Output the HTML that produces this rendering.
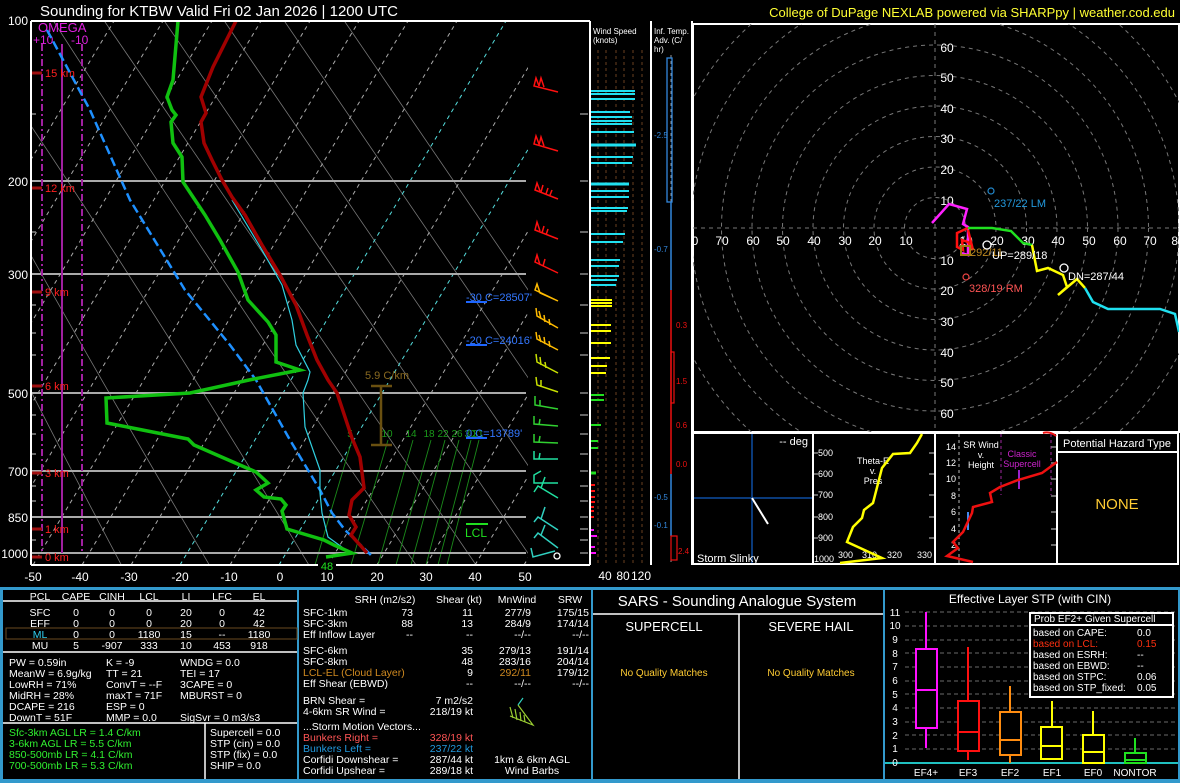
<!DOCTYPE html>
<html><head><meta charset="utf-8">
<style>
html,body{margin:0;padding:0;background:#000;}
svg{display:block;font-family:"Liberation Sans",sans-serif;}
</style></head><body>
<svg width="1180" height="783" viewBox="0 0 1180 783" xmlns="http://www.w3.org/2000/svg">
<rect width="1180" height="783" fill="#000"/>
<!-- title -->
<text x="40" y="16" fill="#fff" font-size="15">Sounding for KTBW Valid  Fri 02 Jan 2026 | 1200 UTC</text>
<text x="1175" y="17" fill="#ffff33" font-size="13" text-anchor="end">College of DuPage NEXLAB powered via SHARPpy | weather.cod.edu</text>

<!-- SKEW-T -->
<defs><clipPath id="sk"><rect x="31" y="21" width="497" height="544"/></clipPath>
<clipPath id="hd"><rect x="693" y="24" width="486" height="408"/></clipPath></defs>
<g clip-path="url(#sk)">
 <!-- dry adiabats -->
 <g stroke="#777" stroke-width="0.8" fill="none">
  <path d="M40,0 Q200,250 440,600"/><path d="M90,0 Q260,250 500,600"/><path d="M150,0 Q320,250 560,600"/>
  <path d="M210,0 Q380,250 620,600"/><path d="M270,0 Q440,250 680,600"/><path d="M330,0 Q500,250 740,600"/>
  <path d="M0,80 Q150,300 330,600"/><path d="M0,200 Q100,380 230,600"/><path d="M0,330 Q60,450 140,600"/>
 </g>
 <!-- isotherms -->
 <g stroke="#aaa" stroke-width="1" stroke-dasharray="4,4" fill="none">
  <line x1="-16" y1="565" x2="310" y2="21"/><line x1="33" y1="565" x2="359" y2="21"/><line x1="82" y1="565" x2="408" y2="21"/>
  <line x1="131" y1="565" x2="457" y2="21"/><line x1="230" y1="565" x2="556" y2="21"/>
  <line x1="328" y1="565" x2="654" y2="21"/><line x1="377" y1="565" x2="703" y2="21"/><line x1="426" y1="565" x2="752" y2="21"/>
  <line x1="475" y1="565" x2="801" y2="21"/><line x1="524" y1="565" x2="850" y2="21"/>
  <line x1="-65" y1="565" x2="261" y2="21"/><line x1="-114" y1="565" x2="212" y2="21"/><line x1="-163" y1="565" x2="163" y2="21"/><line x1="-212" y1="565" x2="114" y2="21"/>
 </g>
 <g stroke="#5dd" stroke-width="1" stroke-dasharray="4,4" fill="none">
  <line x1="180" y1="565" x2="506" y2="21"/><line x1="279" y1="565" x2="605" y2="21"/>
 </g>
 <!-- mixing ratio -->
 <g stroke="#1a8a1a" stroke-width="0.9">
  <line x1="352" y1="440" x2="315" y2="565"/><line x1="388" y1="440" x2="351" y2="565"/><line x1="413" y1="440" x2="378" y2="565"/>
  <line x1="431" y1="440" x2="396" y2="565"/><line x1="445" y1="440" x2="411" y2="565"/><line x1="459" y1="440" x2="426" y2="565"/>
  <line x1="471" y1="440" x2="438" y2="565"/><line x1="479" y1="440" x2="447" y2="565"/>
 </g>
 <g fill="#1a9a1a" font-size="10" text-anchor="middle">
  <text x="350" y="437">5</text><text x="387" y="437">10</text><text x="411" y="437">14</text><text x="429" y="437">18</text><text x="443" y="437">22</text><text x="457" y="437">26</text><text x="470" y="437">30</text><text x="478" y="437">31</text>
 </g>
</g>
<!-- pressure lines -->
<g stroke="#aaa" stroke-width="2">
 <line x1="31" y1="181" x2="526" y2="181"/><line x1="31" y1="274" x2="526" y2="274"/><line x1="31" y1="393" x2="526" y2="393"/>
 <line x1="31" y1="471" x2="526" y2="471"/><line x1="31" y1="517" x2="526" y2="517"/><line x1="31" y1="553" x2="526" y2="553"/>
</g>
<g fill="#fff" font-size="12" text-anchor="end">
 <text x="28" y="25">100</text><text x="28" y="186">200</text><text x="28" y="279">300</text><text x="28" y="398">500</text>
 <text x="28" y="476">700</text><text x="28" y="522">850</text><text x="28" y="558">1000</text>
</g>
<!-- pressure ticks -->
<g stroke="#888" stroke-width="1.5">
 <line x1="31" y1="114" x2="36" y2="114"/><line x1="31" y1="232" x2="36" y2="232"/><line x1="31" y1="305" x2="36" y2="305"/><line x1="31" y1="333" x2="36" y2="333"/>
 <line x1="31" y1="355" x2="36" y2="355"/><line x1="31" y1="415" x2="36" y2="415"/><line x1="31" y1="434" x2="36" y2="434"/><line x1="31" y1="454" x2="36" y2="454"/>
 <line x1="31" y1="486" x2="36" y2="486"/><line x1="31" y1="501" x2="36" y2="501"/><line x1="31" y1="540" x2="36" y2="540"/>
 <line x1="580" y1="114" x2="588" y2="114"/><line x1="580" y1="181" x2="588" y2="181"/><line x1="580" y1="232" x2="588" y2="232"/><line x1="580" y1="274" x2="588" y2="274"/>
 <line x1="580" y1="305" x2="588" y2="305"/><line x1="580" y1="333" x2="588" y2="333"/><line x1="580" y1="355" x2="588" y2="355"/><line x1="580" y1="393" x2="588" y2="393"/>
 <line x1="580" y1="415" x2="588" y2="415"/><line x1="580" y1="434" x2="588" y2="434"/><line x1="580" y1="454" x2="588" y2="454"/><line x1="580" y1="471" x2="588" y2="471"/>
 <line x1="580" y1="486" x2="588" y2="486"/><line x1="580" y1="501" x2="588" y2="501"/><line x1="580" y1="517" x2="588" y2="517"/><line x1="580" y1="529" x2="588" y2="529"/><line x1="580" y1="540" x2="588" y2="540"/><line x1="580" y1="553" x2="588" y2="553"/>
</g>
<!-- omega -->
<g stroke="#a020a0" stroke-width="2">
 <line x1="42" y1="44" x2="42" y2="553" stroke-dasharray="7,3,2,3"/>
 <line x1="82" y1="44" x2="82" y2="553" stroke-dasharray="7,3,2,3"/>
 <line x1="62" y1="44" x2="62" y2="553"/>
</g>
<text x="38" y="32" fill="#e020e0" font-size="13">OMEGA</text>
<text x="33" y="44" fill="#e020e0" font-size="12">+10</text><text x="71" y="44" fill="#e020e0" font-size="12">-10</text>
<!-- height labels -->
<g stroke="#a01010" stroke-width="3">
 <line x1="31" y1="73" x2="42" y2="73"/><line x1="31" y1="188" x2="42" y2="188"/><line x1="31" y1="292" x2="42" y2="292"/><line x1="31" y1="386" x2="42" y2="386"/>
 <line x1="31" y1="473" x2="42" y2="473"/><line x1="31" y1="529" x2="42" y2="529"/><line x1="31" y1="557" x2="42" y2="557"/>
</g>
<g fill="#ff2020" font-size="11">
 <text x="45" y="77">15 km</text><text x="45" y="192">12 km</text><text x="45" y="296">9 km</text><text x="45" y="390">6 km</text>
 <text x="45" y="477">3 km</text><text x="45" y="533">1 km</text><text x="45" y="561">0 km</text>
</g>
<!-- parcel -->
<polyline fill="none" stroke="#1e90ff" stroke-width="2.5" stroke-dasharray="9,4" points="47,30 90,110 130,200 185,290 230,345 256,380 290,440 320,490 332,513 345,530 373,557"/>
<!-- virtual temp -->
<polyline fill="none" stroke="#30d0e0" stroke-width="1.2" points="232,200 262,250 282,285 292,320 296,345 310,372 308,380 303,393 305,427 320,470 320,493 322,513 328,537 350,553"/>
<!-- temperature -->
<polyline fill="none" stroke="#a00000" stroke-width="3.5" points="236,21 213,67 201,97 206,113 201,122 204,143 212,160 222,180 232,197 245,215 262,245 280,275 296,305 307,335 317,360 328,380 337,393 345,417 352,438 360,457 364,488 352,500 349,515 356,527 351,535 360,545 367,553"/>
<!-- dewpoint -->
<polyline fill="none" stroke="#10c010" stroke-width="3.5" points="178,21 173,80 167,97 172,110 176,115 171,122 173,143 182,157 183,182 193,197 205,215 220,240 238,272 248,300 268,322 276,335 276,362 300,370 249,380 190,393 106,398 107,423 188,439 194,445 256,472 268,483 256,490 264,497 281,499 286,505 282,511 287,529 324,540 334,545 352,553 326,557"/>
<!-- lapse rate bracket -->
<g stroke="#6a5010" stroke-width="2.5"><line x1="381" y1="386" x2="381" y2="445"/><line x1="371" y1="386" x2="392" y2="386"/><line x1="371" y1="445" x2="392" y2="445"/></g>
<text x="365" y="379" fill="#8a6a20" font-size="11">5.9 C/km</text>
<!-- freezing labels -->
<g fill="#3377ff" font-size="11">
 <text x="466" y="301">-30 C=28507'</text><text x="466" y="344">-20 C=24016'</text><text x="466" y="437">0 C=13789'</text>
</g>
<g stroke="#1e66ff" stroke-width="2"><line x1="466" y1="302" x2="487" y2="302"/><line x1="466" y1="345" x2="487" y2="345"/><line x1="466" y1="438" x2="487" y2="438"/></g>
<line x1="466" y1="524" x2="488" y2="524" stroke="#20e020" stroke-width="2"/>
<text x="465" y="537" fill="#20e020" font-size="12">LCL</text>
<circle cx="557" cy="556" r="3" fill="none" stroke="#fff" stroke-width="1.3"/>
<!-- frame -->
<g stroke="#fff" stroke-width="2" fill="none">
 <line x1="31" y1="21" x2="31" y2="565"/><line x1="31" y1="21" x2="590" y2="21"/><line x1="31" y1="565" x2="590" y2="565"/>
</g>
<rect x="318" y="559" width="18" height="13" fill="#000"/>
<text x="327" y="570" fill="#20e020" font-size="11" text-anchor="middle">48</text>
<g fill="#fff" font-size="12" text-anchor="middle">
 <text x="33" y="581">-50</text><text x="80" y="581">-40</text><text x="129" y="581">-30</text><text x="180" y="581">-20</text><text x="229" y="581">-10</text>
 <text x="280" y="581">0</text><text x="327" y="581">10</text><text x="377" y="581">20</text><text x="426" y="581">30</text><text x="475" y="581">40</text><text x="525" y="581">50</text>
 <text x="605" y="580">40</text><text x="623" y="580">80</text><text x="641" y="580">120</text>
</g>
<!-- wind barbs -->
<g fill="none" stroke-width="1.5">
 <g stroke="#ff1010">
  <path d="M558,92 L534,86 L536,78 L539,86 M539,86 L541,78 L544,87"/>
  <path d="M558,151 L534,144 L536,136 L539,144 M539,145 L541,137 L544,146"/>
  <path d="M558,199 L535,190 L537,183 L540,191 M541,192 L543,185 M546,194 L548,188 M550,195 L552,190"/>
  <path d="M558,239 L535,230 L537,222 L540,231 M542,233 L544,226 M546,235 L548,229"/>
  <path d="M558,273 L535,262 L537,255 L540,265 M543,266 L545,259"/>
 </g>
 <g stroke="#ffbb00">
  <path d="M558,301 L535,290 L537,284 L540,293 Z"/>
  <path d="M558,328 L537,316 L536,308 M541,319 L539,311 M545,322 L544,315 M550,325 L549,319"/>
  <path d="M558,350 L537,339 L536,332 M541,342 L539,335 M545,344 L544,337 M550,347 L549,341"/>
 </g>
 <g stroke="#c8e000">
  <path d="M558,373 L537,362 L536,354 M541,365 L540,357 M546,368 L545,362"/>
  <path d="M558,392 L537,385 L536,377 M541,387 L541,380"/>
 </g>
 <g stroke="#30d030">
  <path d="M558,409 L535,405 L535,396 M540,406 L540,400"/>
  <path d="M558,426 L534,424 L534,416 M539,425 L540,419"/>
  <path d="M558,443 L534,442 L534,434 M539,442 L540,436"/>
 </g>
 <g stroke="#20e0a0">
  <path d="M558,459 L534,459 L534,451 M539,459 L540,453"/>
  <path d="M558,483 L534,483 L534,475 L541,471"/>
  <path d="M558,498 L538,486 L534,492 M541,488 L545,477"/>
 </g>
 <g stroke="#30d0c0">
  <path d="M558,530 L538,517 L534,522 M541,519 L545,507"/>
  <path d="M558,548 L538,533 L534,538 M541,535 L545,525"/>
  <path d="M555,551 L533,557 L531,548"/>
 </g>
</g>

<!-- wind speed panel -->
<g stroke="#fff" stroke-width="2"><line x1="590" y1="21" x2="590" y2="565"/><line x1="651" y1="21" x2="651" y2="565"/><line x1="692" y1="21" x2="692" y2="565"/></g>
<g stroke="#6a4020" stroke-width="1" stroke-dasharray="3,3">
 <line x1="598" y1="50" x2="598" y2="565"/><line x1="606" y1="50" x2="606" y2="565"/><line x1="616" y1="50" x2="616" y2="565"/><line x1="624" y1="50" x2="624" y2="565"/><line x1="633" y1="50" x2="633" y2="565"/><line x1="642" y1="50" x2="642" y2="565"/>
</g>
<text x="593" y="34" fill="#fff" font-size="8">Wind Speed</text><text x="593" y="43" fill="#fff" font-size="8">(knots)</text>
<g stroke="#20e0f0" stroke-width="2">
 <line x1="591" y1="91" x2="635" y2="91"/><line x1="591" y1="94" x2="635" y2="94"/><line x1="591" y1="99" x2="635" y2="99"/>
 <line x1="591" y1="112" x2="630" y2="112"/><line x1="591" y1="117" x2="632" y2="117"/><line x1="591" y1="121" x2="632" y2="121"/><line x1="591" y1="124" x2="632" y2="124"/>
 <line x1="591" y1="132" x2="634" y2="132"/><line x1="591" y1="145" x2="636" y2="145" stroke-width="3"/><line x1="591" y1="157" x2="633" y2="157"/><line x1="591" y1="163" x2="632" y2="163"/>
 <line x1="591" y1="184" x2="629" y2="184" stroke-width="3"/><line x1="591" y1="191" x2="629" y2="191"/><line x1="591" y1="197" x2="629" y2="197"/>
 <line x1="591" y1="208" x2="628" y2="208"/><line x1="591" y1="211" x2="627" y2="211"/><line x1="591" y1="234" x2="625" y2="234"/><line x1="591" y1="242" x2="623" y2="242"/>
 <line x1="591" y1="260" x2="620" y2="260"/><line x1="591" y1="266" x2="619" y2="266"/><line x1="591" y1="276" x2="619" y2="276"/><line x1="591" y1="280" x2="617" y2="280"/><line x1="591" y1="285" x2="616" y2="285"/>
</g>
<g stroke="#ffff00" stroke-width="2">
 <line x1="591" y1="300" x2="612" y2="300"/><line x1="591" y1="303" x2="612" y2="303"/><line x1="591" y1="306" x2="612" y2="306"/>
 <line x1="591" y1="325" x2="611" y2="325"/><line x1="591" y1="331" x2="611" y2="331"/><line x1="591" y1="343" x2="611" y2="343"/>
 <line x1="591" y1="358" x2="610" y2="358"/><line x1="591" y1="366" x2="607" y2="366"/><line x1="591" y1="373" x2="606" y2="373"/>
</g>
<g stroke="#20e020" stroke-width="2">
 <line x1="591" y1="395" x2="604" y2="395"/><line x1="591" y1="400" x2="604" y2="400"/><line x1="591" y1="425" x2="601" y2="425"/>
 <line x1="591" y1="441" x2="598" y2="441"/><line x1="591" y1="448" x2="598" y2="448"/><line x1="591" y1="473" x2="596" y2="473" stroke-width="3"/>
</g>
<g stroke="#ff1010" stroke-width="2">
 <line x1="591" y1="485" x2="595" y2="485"/><line x1="591" y1="491" x2="595" y2="491"/><line x1="591" y1="497" x2="595" y2="497"/><line x1="591" y1="502" x2="595" y2="502"/>
 <line x1="591" y1="507" x2="594" y2="507"/><line x1="591" y1="511" x2="594" y2="511"/><line x1="591" y1="517" x2="594" y2="517"/>
</g>
<g stroke="#ff10ff" stroke-width="2">
 <line x1="591" y1="530" x2="594" y2="530"/><line x1="591" y1="536" x2="597" y2="536"/><line x1="591" y1="547" x2="595" y2="547"/><line x1="591" y1="553" x2="596" y2="553"/>
</g>
<!-- temp advection -->
<text x="654" y="34" fill="#fff" font-size="8">Inf. Temp.</text><text x="654" y="43" fill="#fff" font-size="8">Adv. (C/</text><text x="654" y="52" fill="#fff" font-size="8">hr)</text>
<line x1="671" y1="55" x2="671" y2="565" stroke="#999" stroke-width="1" stroke-dasharray="3,3"/>
<rect x="667" y="58" width="5" height="144" fill="none" stroke="#3388dd" stroke-width="1.3"/>
<line x1="671" y1="202" x2="671" y2="290" stroke="#3388dd" stroke-width="1.5"/>
<line x1="671" y1="290" x2="671" y2="474" stroke="#ee1010" stroke-width="1.5"/>
<rect x="671" y="352" width="3" height="51" fill="none" stroke="#ee1010" stroke-width="1.2"/>
<line x1="671" y1="474" x2="671" y2="536" stroke="#3388dd" stroke-width="1.5"/>
<rect x="671" y="536" width="6" height="24" fill="none" stroke="#ee1010" stroke-width="1.2"/>
<g font-size="8">
 <text x="654" y="138" fill="#3388dd">-2.5</text><text x="654" y="252" fill="#3388dd">-0.7</text>
 <text x="676" y="328" fill="#ee1010">0.3</text><text x="676" y="384" fill="#ee1010">1.5</text><text x="676" y="428" fill="#ee1010">0.6</text><text x="676" y="467" fill="#ee1010">0.0</text>
 <text x="654" y="500" fill="#3388dd">-0.5</text><text x="654" y="528" fill="#3388dd">-0.1</text><text x="678" y="554" fill="#ee1010">2.4</text>
</g>

<!-- HODOGRAPH -->
<rect x="693" y="24" width="486" height="408" fill="none" stroke="#fff" stroke-width="2"/>
<g clip-path="url(#hd)">
 <g fill="none" stroke="#777" stroke-width="1" stroke-dasharray="4,4">
  <circle cx="935" cy="228" r="30.5"/><circle cx="935" cy="228" r="61"/><circle cx="935" cy="228" r="91.5"/><circle cx="935" cy="228" r="122"/>
  <circle cx="935" cy="228" r="152.5"/><circle cx="935" cy="228" r="183"/><circle cx="935" cy="228" r="213.5"/><circle cx="935" cy="228" r="244"/><circle cx="935" cy="228" r="274.5"/>
  <line x1="693" y1="228" x2="1180" y2="228"/><line x1="935" y1="24" x2="935" y2="432"/>
 </g>
 <g fill="#fff" font-size="12" text-anchor="middle">
  <text x="947" y="52">60</text><text x="947" y="82">50</text><text x="947" y="113">40</text><text x="947" y="143">30</text><text x="947" y="174">20</text><text x="947" y="205">10</text>
  <text x="947" y="265">10</text><text x="947" y="295">20</text><text x="947" y="326">30</text><text x="947" y="357">40</text><text x="947" y="387">50</text><text x="947" y="418">60</text>
  <text x="722" y="245">70</text><text x="753" y="245">60</text><text x="783" y="245">50</text><text x="814" y="245">40</text><text x="845" y="245">30</text><text x="875" y="245">20</text><text x="906" y="245">10</text>
  <text x="966" y="245">10</text><text x="997" y="245">20</text><text x="1028" y="245">30</text><text x="1058" y="245">40</text><text x="1089" y="245">50</text><text x="1120" y="245">60</text><text x="1150" y="245">70</text><text x="1178" y="245">80</text><text x="695" y="245">0</text>
 </g>
 <polyline fill="none" stroke="#ff20ff" stroke-width="2.5" points="932,223 949,204 967,209 963,224 968,227 968,255 962,253"/>
 <polyline fill="none" stroke="#ff1010" stroke-width="2.5" points="968,228 957,233 957,247 963,250 962,240 968,242 973,250 968,230"/>
 <polyline fill="none" stroke="#20e020" stroke-width="2.5" points="968,228 992,228 1011,231 1023,243 1032,245"/>
 <polyline fill="none" stroke="#ffff00" stroke-width="2.5" points="1032,245 1037,271 1048,268 1063,275 1067,287 1058,295 1077,279 1085,288"/>
 <polyline fill="none" stroke="#20e0f0" stroke-width="2.5" points="1085,288 1093,302 1108,309 1160,309 1175,314 1179,332"/>
 <rect x="961" y="246" width="9" height="9" fill="none" stroke="#a07a10" stroke-width="2"/>
 <text x="970" y="256" fill="#c08a20" font-size="11">292/11</text>
 <circle cx="987" cy="245" r="4" fill="none" stroke="#fff" stroke-width="1.3"/>
 <text x="992" y="259" fill="#fff" font-size="11">UP=289/18</text>
 <circle cx="1064" cy="268" r="4" fill="none" stroke="#fff" stroke-width="1.3"/>
 <text x="1068" y="280" fill="#fff" font-size="11">DN=287/44</text>
 <circle cx="991" cy="191" r="3" fill="none" stroke="#2288cc" stroke-width="1.2"/>
 <text x="994" y="207" fill="#2299dd" font-size="11">237/22 LM</text>
 <circle cx="966" cy="277" r="3" fill="none" stroke="#ee4444" stroke-width="1.2"/>
 <text x="969" y="292" fill="#ff5555" font-size="11">328/19 RM</text>
</g>

<!-- small panels -->
<g stroke="#fff" stroke-width="2" fill="none">
 <rect x="693" y="433" width="485" height="131"/>
 <line x1="813" y1="433" x2="813" y2="564"/><line x1="935" y1="433" x2="935" y2="564"/><line x1="1057" y1="433" x2="1057" y2="564"/>
 <line x1="1057" y1="452" x2="1178" y2="452"/>
</g>
<g stroke="#0a3a7a" stroke-width="2"><line x1="752" y1="434" x2="752" y2="563"/><line x1="694" y1="498" x2="812" y2="498"/></g>
<line x1="752" y1="498" x2="768" y2="524" stroke="#fff" stroke-width="2"/>
<text x="808" y="445" fill="#fff" font-size="11" text-anchor="end">-- deg</text>
<text x="697" y="562" fill="#fff" font-size="11">Storm Slinky</text>
<!-- theta-e -->
<g stroke="#888" stroke-width="1.5">
 <line x1="814" y1="453" x2="818" y2="453"/><line x1="814" y1="474" x2="818" y2="474"/><line x1="814" y1="495" x2="818" y2="495"/><line x1="814" y1="517" x2="818" y2="517"/><line x1="814" y1="538" x2="818" y2="538"/>
 <line x1="929" y1="453" x2="934" y2="453"/><line x1="929" y1="474" x2="934" y2="474"/><line x1="929" y1="495" x2="934" y2="495"/><line x1="929" y1="517" x2="934" y2="517"/><line x1="929" y1="538" x2="934" y2="538"/>
</g>
<g fill="#fff" font-size="9">
 <text x="818" y="456">500</text><text x="818" y="477">600</text><text x="818" y="498">700</text><text x="818" y="520">800</text><text x="818" y="541">900</text><text x="814" y="562">1000</text>
 <text x="838" y="558">300</text><text x="862" y="558">310</text><text x="887" y="558">320</text><text x="917" y="558">330</text>
 <text x="873" y="464" text-anchor="middle">Theta-E</text><text x="873" y="474" text-anchor="middle">v.</text><text x="873" y="484" text-anchor="middle">Pres</text>
</g>
<polyline fill="none" stroke="#ffff00" stroke-width="2.5" points="922,434 917,443 910,453 893,454 882,468 873,503 864,510 862,518 853,527 847,542 882,558 840,563"/>
<!-- SR wind -->
<line x1="959" y1="434" x2="959" y2="563" stroke="#999" stroke-width="1.2" stroke-dasharray="3,3"/>
<g stroke="#6a1a6a" stroke-width="1.5" stroke-dasharray="3,3"><line x1="1001" y1="434" x2="1001" y2="495"/><line x1="1051" y1="434" x2="1051" y2="495"/></g>
<g stroke="#888" stroke-width="1.5">
 <line x1="1051" y1="447" x2="1056" y2="447"/><line x1="1051" y1="463" x2="1056" y2="463"/><line x1="1051" y1="479" x2="1056" y2="479"/><line x1="1051" y1="496" x2="1056" y2="496"/><line x1="1051" y1="512" x2="1056" y2="512"/><line x1="1051" y1="529" x2="1056" y2="529"/><line x1="1051" y1="545" x2="1056" y2="545"/>
</g>
<g fill="#fff" font-size="9" text-anchor="end">
 <text x="956" y="450">14</text><text x="956" y="466">12</text><text x="956" y="482">10</text><text x="956" y="499">8</text><text x="956" y="515">6</text><text x="956" y="532">4</text><text x="956" y="548">2</text>
</g>
<g fill="#fff" font-size="9" text-anchor="middle"><text x="981" y="448">SR Wind</text><text x="981" y="458">v.</text><text x="981" y="468">Height</text></g>
<g fill="#cc22cc" font-size="9" text-anchor="middle"><text x="1022" y="457">Classic</text><text x="1022" y="467">Supercell</text></g>
<line x1="1019" y1="470" x2="1019" y2="489" stroke="#9922cc" stroke-width="2"/>
<line x1="968" y1="512" x2="968" y2="530" stroke="#4488ee" stroke-width="2"/>
<polyline fill="none" stroke="#ee1010" stroke-width="2.5" points="1057,462 1042,473 1018,480 1000,487 990,493 992,502 973,507 972,513 963,532 953,542 958,548 947,556 973,562"/>
<path d="M1043,433 Q1050,431 1056,436" stroke="#ee1010" stroke-width="2" fill="none"/>
<text x="1117" y="447" fill="#fff" font-size="11" text-anchor="middle">Potential Hazard Type</text>
<text x="1117" y="509" fill="#ffcc33" font-size="15" text-anchor="middle">NONE</text>

<!-- BOTTOM PANEL -->
<rect x="0" y="587" width="1180" height="196" fill="#3399cc"/>
<rect x="3" y="590" width="294" height="189" fill="#000"/>
<rect x="299" y="590" width="292" height="189" fill="#000"/>
<rect x="593" y="590" width="290" height="189" fill="#000"/>
<rect x="885" y="590" width="293" height="189" fill="#000"/>
<g stroke="#fff" stroke-width="1.5">
 <line x1="3" y1="601" x2="297" y2="601"/><line x1="3" y1="652" x2="297" y2="652"/><line x1="3" y1="723" x2="297" y2="723"/><line x1="205" y1="723" x2="205" y2="779"/>
 <line x1="593" y1="614" x2="883" y2="614"/><line x1="739" y1="614" x2="739" y2="779"/>
</g>
<rect x="6" y="628" width="291" height="11" fill="none" stroke="#6a4a20" stroke-width="1"/>
<g font-size="10.5" fill="#fff" text-anchor="middle">
 <text x="40" y="600">PCL</text><text x="76" y="600">CAPE</text><text x="112" y="600">CINH</text><text x="149" y="600">LCL</text><text x="186" y="600">LI</text><text x="222" y="600">LFC</text><text x="259" y="600">EL</text>
 <text x="40" y="616">SFC</text><text x="76" y="616">0</text><text x="112" y="616">0</text><text x="149" y="616">0</text><text x="186" y="616">20</text><text x="222" y="616">0</text><text x="259" y="616">42</text>
 <text x="40" y="627">EFF</text><text x="76" y="627">0</text><text x="112" y="627">0</text><text x="149" y="627">0</text><text x="186" y="627">20</text><text x="222" y="627">0</text><text x="259" y="627">42</text>
 <text x="40" y="638" fill="#30d0f0">ML</text><text x="76" y="638">0</text><text x="112" y="638">0</text><text x="149" y="638">1180</text><text x="186" y="638">15</text><text x="222" y="638">--</text><text x="259" y="638">1180</text>
 <text x="40" y="649">MU</text><text x="76" y="649">5</text><text x="112" y="649">-907</text><text x="149" y="649">333</text><text x="186" y="649">10</text><text x="222" y="649">453</text><text x="259" y="649">918</text>
</g>
<g font-size="10.5" fill="#fff">
 <text x="9" y="666">PW = 0.59in</text><text x="106" y="666">K = -9</text><text x="180" y="666">WNDG = 0.0</text>
 <text x="9" y="677">MeanW = 6.9g/kg</text><text x="106" y="677">TT = 21</text><text x="180" y="677">TEI = 17</text>
 <text x="9" y="688">LowRH = 71%</text><text x="106" y="688">ConvT = --F</text><text x="180" y="688">3CAPE = 0</text>
 <text x="9" y="699">MidRH = 28%</text><text x="106" y="699">maxT = 71F</text><text x="180" y="699">MBURST = 0</text>
 <text x="9" y="710">DCAPE = 216</text><text x="106" y="710">ESP = 0</text>
 <text x="9" y="721">DownT = 51F</text><text x="106" y="721">MMP = 0.0</text><text x="180" y="721">SigSvr = 0 m3/s3</text>
 <text x="210" y="736">Supercell = 0.0</text><text x="210" y="747">STP (cin) = 0.0</text><text x="210" y="758">STP (fix) = 0.0</text><text x="210" y="769">SHIP = 0.0</text>
</g>
<g font-size="10.5" fill="#30f030">
 <text x="9" y="736">Sfc-3km AGL LR = 1.4 C/km</text><text x="9" y="747">3-6km AGL LR = 5.5 C/km</text><text x="9" y="758">850-500mb LR = 4.1 C/km</text><text x="9" y="769">700-500mb LR = 5.3 C/km</text>
</g>
<!-- kinematics -->
<g font-size="10.5" fill="#fff">
 <text x="385" y="603" text-anchor="middle">SRH (m2/s2)</text><text x="459" y="603" text-anchor="middle">Shear (kt)</text><text x="517" y="603" text-anchor="middle">MnWind</text><text x="570" y="603" text-anchor="middle">SRW</text>
 <text x="303" y="616">SFC-1km</text><text x="303" y="627">SFC-3km</text><text x="303" y="638">Eff Inflow Layer</text>
 <text x="303" y="654">SFC-6km</text><text x="303" y="665">SFC-8km</text><text x="303" y="676" fill="#d08a20">LCL-EL (Cloud Layer)</text><text x="303" y="687">Eff Shear (EBWD)</text>
 <text x="303" y="704">BRN Shear =</text><text x="303" y="715">4-6km SR Wind =</text>
 <text x="303" y="730">...Storm Motion Vectors...</text>
 <text x="303" y="741" fill="#ff5555">Bunkers Right =</text><text x="303" y="752" fill="#2299dd">Bunkers Left =</text>
 <text x="303" y="763">Corfidi Downshear =</text><text x="303" y="774">Corfidi Upshear =</text>
 <text x="532" y="763" text-anchor="middle">1km &amp; 6km AGL</text><text x="532" y="774" text-anchor="middle">Wind Barbs</text>
</g>
<g font-size="10.5" fill="#fff" text-anchor="end">
 <text x="413" y="616">73</text><text x="473" y="616">11</text><text x="531" y="616">277/9</text><text x="589" y="616">175/15</text>
 <text x="413" y="627">88</text><text x="473" y="627">13</text><text x="531" y="627">284/9</text><text x="589" y="627">174/14</text>
 <text x="413" y="638">--</text><text x="473" y="638">--</text><text x="531" y="638">--/--</text><text x="589" y="638">--/--</text>
 <text x="473" y="654">35</text><text x="531" y="654">279/13</text><text x="589" y="654">191/14</text>
 <text x="473" y="665">48</text><text x="531" y="665">283/16</text><text x="589" y="665">204/14</text>
 <text x="473" y="676">9</text><text x="531" y="676" fill="#d08a20">292/11</text><text x="589" y="676">179/12</text>
 <text x="473" y="687">--</text><text x="531" y="687">--/--</text><text x="589" y="687">--/--</text>
 <text x="473" y="704">7 m2/s2</text><text x="473" y="715">218/19 kt</text>
 <text x="473" y="741" fill="#ff5555">328/19 kt</text><text x="473" y="752" fill="#2299dd">237/22 kt</text>
 <text x="473" y="763">287/44 kt</text><text x="473" y="774">289/18 kt</text>
</g>
<g fill="none" stroke-width="1.2">
 <path d="M510,716 L533,725 L518,705 M513,718 L510,707 M517,720 L515,709 M521,721 L520,712 M525,722 L524,715" stroke="#9acd32"/>
 <path d="M518,705 L523,698" stroke="#30d0c0"/>
</g>
<!-- SARS -->
<text x="737" y="606" fill="#fff" font-size="15" text-anchor="middle">SARS - Sounding Analogue System</text>
<text x="664" y="631" fill="#fff" font-size="13" text-anchor="middle">SUPERCELL</text>
<text x="811" y="631" fill="#fff" font-size="13" text-anchor="middle">SEVERE HAIL</text>
<text x="664" y="676" fill="#ffcc33" font-size="10" text-anchor="middle">No Quality Matches</text>
<text x="811" y="676" fill="#ffcc33" font-size="10" text-anchor="middle">No Quality Matches</text>
<!-- STP -->
<text x="1030" y="603" fill="#fff" font-size="12" text-anchor="middle">Effective Layer STP (with CIN)</text>
<g stroke="#555" stroke-width="1.2" stroke-dasharray="4,3">
 <line x1="905" y1="612" x2="1178" y2="612"/><line x1="905" y1="626" x2="1178" y2="626"/><line x1="905" y1="640" x2="1178" y2="640"/><line x1="905" y1="653" x2="1178" y2="653"/>
 <line x1="905" y1="667" x2="1178" y2="667"/><line x1="905" y1="681" x2="1178" y2="681"/><line x1="905" y1="694" x2="1178" y2="694"/><line x1="905" y1="708" x2="1178" y2="708"/>
 <line x1="905" y1="722" x2="1178" y2="722"/><line x1="905" y1="735" x2="1178" y2="735"/><line x1="905" y1="749" x2="1178" y2="749"/>
</g>
<line x1="885" y1="763" x2="1178" y2="763" stroke="#20c0c0" stroke-width="2"/>
<g fill="#fff" font-size="10" text-anchor="middle">
 <text x="895" y="616">11</text><text x="895" y="629">10</text><text x="895" y="643">9</text><text x="895" y="657">8</text><text x="895" y="670">7</text><text x="895" y="684">6</text>
 <text x="895" y="698">5</text><text x="895" y="711">4</text><text x="895" y="725">3</text><text x="895" y="739">2</text><text x="895" y="752">1</text><text x="895" y="766">0</text>
 <text x="926" y="776">EF4+</text><text x="968" y="776">EF3</text><text x="1010" y="776">EF2</text><text x="1052" y="776">EF1</text><text x="1093" y="776">EF0</text><text x="1135" y="776">NONTOR</text>
</g>
<g fill="none" stroke-width="2">
 <g stroke="#ff10ff"><line x1="926" y1="612" x2="926" y2="748"/><rect x="916" y="649" width="21" height="79" fill="#000"/><line x1="916" y1="690" x2="937" y2="690"/></g>
 <g stroke="#ff1010"><line x1="968" y1="647" x2="968" y2="760"/><rect x="958" y="701" width="21" height="50" fill="#000"/><line x1="958" y1="732" x2="979" y2="732"/></g>
 <g stroke="#ff8c10"><line x1="1010" y1="686" x2="1010" y2="763"/><rect x="1000" y="712" width="21" height="43" fill="#000"/><line x1="1000" y1="740" x2="1021" y2="740"/></g>
 <g stroke="#ffff00"><line x1="1052" y1="701" x2="1052" y2="759"/><rect x="1041" y="727" width="21" height="32" fill="#000"/><line x1="1041" y1="746" x2="1062" y2="746"/></g>
 <g stroke="#ffff00"><line x1="1093" y1="711" x2="1093" y2="763"/><rect x="1083" y="735" width="21" height="28" fill="#000"/><line x1="1083" y1="752" x2="1104" y2="752"/></g>
 <g stroke="#20e020"><line x1="1135" y1="738" x2="1135" y2="763"/><rect x="1125" y="753" width="21" height="10" fill="#000"/><line x1="1125" y1="760" x2="1146" y2="760"/></g>
</g>
<rect x="1030" y="613" width="143" height="84" fill="#000" stroke="#fff" stroke-width="2"/>
<line x1="1030" y1="625" x2="1173" y2="625" stroke="#fff" stroke-width="2"/>
<g font-size="10" fill="#fff">
 <text x="1034" y="622">Prob EF2+ Given Supercell</text>
 <text x="1033" y="636">based on CAPE:</text><text x="1137" y="636">0.0</text>
 <text x="1033" y="647" fill="#ff3010">based on LCL:</text><text x="1137" y="647" fill="#ff3010">0.15</text>
 <text x="1033" y="658">based on ESRH:</text><text x="1137" y="658">--</text>
 <text x="1033" y="669">based on EBWD:</text><text x="1137" y="669">--</text>
 <text x="1033" y="680">based on STPC:</text><text x="1137" y="680">0.06</text>
 <text x="1033" y="691">based on STP_fixed:</text><text x="1137" y="691">0.05</text>
</g>
</svg>
</body></html>
